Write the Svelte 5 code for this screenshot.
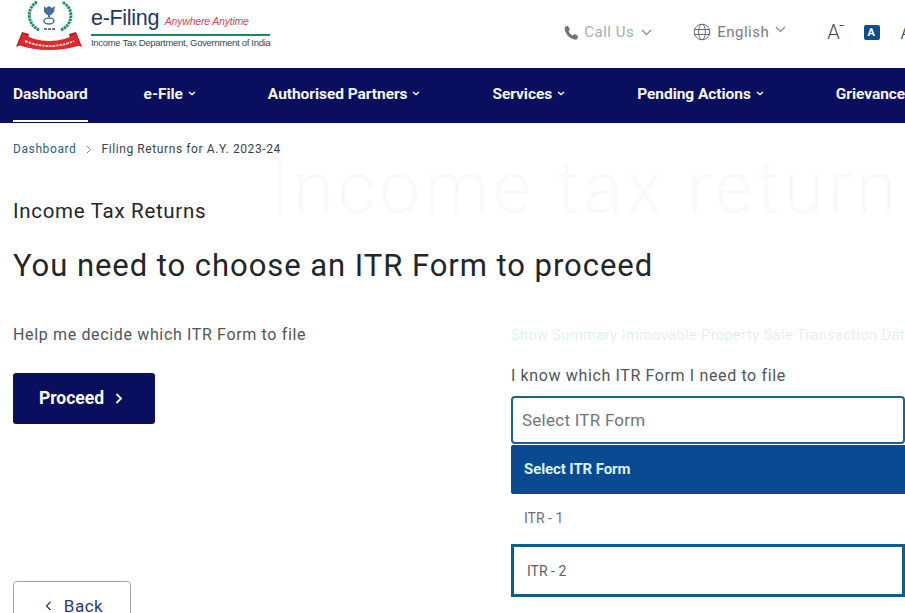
<script>
  const navItems = [
    { label: 'Dashboard', active: true },
    { label: 'e-File', caret: true },
    { label: 'Authorised Partners', caret: true },
    { label: 'Services', caret: true },
    { label: 'Pending Actions', caret: true },
    { label: 'Grievance' }
  ];
</script>

<div class="page">
  <header class="top">
    <div class="brand">
      <svg class="emblem" width="70" height="50" viewBox="0 0 70 50">
        <path d="M24 30C13 25 10 9 22 2M46 30C58 25 60 8 47 2" fill="none" stroke="#1d8f63" stroke-width="3" stroke-dasharray="2.500 .7"/>
        <path d="M29 6l2 2 3-2 3 2 3-2-1 6-3 3h-4l-3-3z" fill="#47709c"/>
        <path d="M33 14h2v3h-2z" fill="#47709c"/>
        <ellipse cx="34" cy="21" rx="5" ry="3" fill="none" stroke="#47709c" stroke-width="1.500"/>
        <path d="M29 29h3M33 29h3M37 29h3" stroke="#4a5058" stroke-width="1.500"/>
        <path d="M1 47L7 32l7 2-2 8z" fill="#b5181e"/>
        <path d="M67 47l-6-15-7 2 2 8z" fill="#b5181e"/>
        <path d="M8 33Q18 41 34 41Q51 41 61 33L66 45Q52 50 34 50Q17 50 3 45z" fill="#dc2a2e"/>
        <path d="M10 41Q22 46 34 46Q47 46 59 41" fill="none" stroke="#fbd9d2" stroke-width="2" stroke-dasharray="3 1 2 1"/>
      </svg>
      <div class="brand-text">
        <div class="brand-title">e-Filing <em>Anywhere Anytime</em></div>
        <div class="brand-sub">Income Tax Department, Government of India</div>
      </div>
    </div>
    <div class="tools">
      <span class="tool call">
        <svg width="17" height="17" viewBox="0 0 24 24"><path d="M6.600 2.500l3.200 5-2 2.600c1 2.600 3.400 5 6.100 6.100l2.600-2 5 3.200-1.500 3.800c-.4.800-1.200 1.100-2 1C9.500 21 3 14.500 2.300 6c-.1-.8.200-1.600 1-2z" fill="#6d7480"/></svg>
        Call Us
        <svg class="chev" width="11" height="7" viewBox="0 0 11 7"><path d="M1 1l4.500 4.500L10 1" fill="none" stroke="#8a8f98" stroke-width="1.300"/></svg>
      </span>
      <span class="tool lang">
        <svg width="18" height="18" viewBox="0 0 18 18" fill="none" stroke="#6a6f78" stroke-width="1"><circle cx="9" cy="9" r="7.800"/><ellipse cx="9" cy="9" rx="3.400" ry="7.800"/><path d="M1.500 6.500h15M1.500 11.500h15"/></svg>
        English
        <svg class="chev up" width="11" height="7" viewBox="0 0 11 7"><path d="M1 1l4.500 4.500L10 1" fill="none" stroke="#8a8f98" stroke-width="1.300"/></svg>
      </span>
      <span class="font-size">A<sup>–</sup></span>
      <span class="font-badge">A</span>
      <span class="font-size next">A</span>
    </div>
  </header>

  <nav class="nav">
    {#each navItems as item}
      <span class="nav-item" class:active={item.active}>
        {item.label}
        {#if item.caret}
          <svg width="8" height="5" viewBox="0 0 8 5"><path d="M1 1l3 2.600L7 1" fill="none" stroke="#fff" stroke-width="1.300"/></svg>
        {/if}
      </span>
    {/each}
  </nav>

  <main class="content">
    <div class="watermark">Income tax return</div>
    <div class="crumbs">
      <span class="crumb-link">Dashboard</span>
      <svg width="6" height="9" viewBox="0 0 6 9"><path d="M1 1l3.500 3.500L1 8" fill="none" stroke="#7b8088" stroke-width="1"/></svg>
      <span>Filing Returns for A.Y. 2023-24</span>
    </div>
    <h2>Income Tax Returns</h2>
    <h1>You need to choose an ITR Form to proceed</h1>

    <div class="columns">
      <section class="left">
        <p class="help">Help me decide which ITR Form to file</p>
        <button class="proceed">Proceed
          <svg width="8" height="11" viewBox="0 0 8 11"><path d="M1.500 1l4.500 4.500L1.500 10" fill="none" stroke="#fff" stroke-width="1.800"/></svg>
        </button>
        <button class="back">
          <svg width="7" height="10" viewBox="0 0 7 10"><path d="M5.500 1L1.500 5l4 4" fill="none" stroke="#2b3a78" stroke-width="1.300"/></svg>
          Back
        </button>
      </section>
      <section class="right">
        <p class="summary">Show Summary Immovable Property Sale Transaction Data</p>
        <p class="know">I know which ITR Form I need to file</p>
        <div class="select">Select ITR Form</div>
        <div class="option selected">Select ITR Form</div>
        <div class="option plain">ITR - 1</div>
        <div class="option focused">ITR - 2</div>
      </section>
    </div>
  </main>
</div>

<style>
  :global(body) {
    background: #fff;
    overflow: hidden;
  }

  .page {
    width: 905px;
    height: 613px;
    overflow: hidden;
    font-family: Roboto, "Liberation Sans", sans-serif;
    color: #23272e;
  }

  .top {
    height: 68px;
    display: flex;
    align-items: flex-start;
    justify-content: space-between;
  }

  .brand {
    display: flex;
    align-items: flex-start;
    padding-left: 15px;
  }

  .emblem {
    margin-right: 6px;
    flex: none;
  }

  .brand-text {
    width: 179px;
    padding-top: 5px;
  }

  .brand-title {
    font-family: "Liberation Sans", sans-serif;
    font-size: 21.500px;
    line-height: 26px;
    color: #1c3a5e;
    border-bottom: 2px solid #1c8a5c;
    white-space: nowrap;
    letter-spacing: -0.3px;
  }

  .brand-title em {
    font-size: 10.500px;
    color: #d8474f;
    letter-spacing: -0.2px;
  }

  .brand-sub {
    font-family: "Liberation Sans", sans-serif;
    font-size: 9.500px;
    line-height: 13px;
    letter-spacing: -0.3px;
    color: #3e4550;
    white-space: nowrap;
  }

  .tools {
    display: flex;
    align-items: center;
    height: 64px;
    font-size: 15px;
    letter-spacing: 0.5px;
    white-space: nowrap;
    flex: none;
    margin-right: -8px;
  }

  .tool {
    display: flex;
    align-items: center;
    gap: 4px;
  }

  .call {
    color: #a9adb3;
    margin-right: 41px;
  }

  .call .chev {
    margin-left: 3px;
  }

  .lang {
    color: #777c84;
    gap: 6px;
    margin-right: 41px;
  }

  .lang .chev {
    margin-top: -6px;
  }

  .font-size {
    font-size: 20px;
    font-weight: 300;
    color: #3e4249;
    letter-spacing: 0;
  }

  .font-size sup {
    font-size: 9px;
    margin-left: -1px;
    vertical-align: 10px;
    line-height: 0;
    font-weight: 500;
  }

  .font-badge {
    width: 16px;
    height: 15px;
    margin: 0 21px 0 19px;
    border-radius: 2px;
    background: #0b4f8a;
    color: #fff;
    font-size: 11px;
    font-weight: 700;
    display: flex;
    align-items: center;
    justify-content: center;
  }

  .nav {
    height: 55px;
    background: #0a0e5e;
    display: flex;
    padding-left: 13px;
    gap: 72px;
    white-space: nowrap;
  }

  .nav-item {
    display: flex;
    align-items: center;
    gap: 5px;
    height: 51px;
    color: #f4f6fb;
    font-size: 15.500px;
    font-weight: 700;
    letter-spacing: -0.05px;
  }

  .nav-item.active {
    height: 52px;
    border-bottom: 2px solid #fff;
    margin-right: -16px;
  }

  .content {
    position: relative;
    padding: 18px 0 0 13px;
  }

  .watermark {
    position: absolute;
    left: 270px;
    top: 21px;
    font-size: 74px;
    font-weight: 300;
    letter-spacing: 3.400px;
    color: #f9f9f9;
    white-space: nowrap;
  }

  .crumbs {
    position: relative;
    display: flex;
    align-items: center;
    gap: 9.500px;
    font-size: 12px;
    line-height: 16px;
    letter-spacing: 0.6px;
    color: #3a3f47;
  }

  .crumb-link {
    color: #1f5f85;
  }

  h2 {
    position: relative;
    margin: 40px 0 0;
    font-size: 20.500px;
    font-weight: 400;
    line-height: 28px;
    letter-spacing: 0.7px;
    color: #22262c;
  }

  h1 {
    position: relative;
    margin: 23px 0 0;
    font-size: 31px;
    line-height: 36px;
    font-weight: 400;
    letter-spacing: 0.95px;
    color: #22262c;
    white-space: nowrap;
  }

  .columns {
    display: grid;
    grid-template-columns: 498px 394px;
    margin-top: 40px;
  }

  .left {
    display: flex;
    flex-direction: column;
    align-items: flex-start;
  }

  .help {
    margin: 0;
    font-size: 16px;
    line-height: 22px;
    letter-spacing: 0.65px;
    color: #50555c;
  }

  .proceed {
    margin-top: 27px;
    width: 142px;
    height: 51px;
    border: 0;
    border-radius: 3px;
    background: #0a0e5e;
    color: #fff;
    font: 700 17.500px Roboto, sans-serif;
    display: flex;
    align-items: center;
    justify-content: center;
    gap: 11px;
    padding: 0 6px 1px 0;
  }

  .back {
    margin-top: 157px;
    width: 118px;
    height: 52px;
    border: 1px solid #9aa3b5;
    border-radius: 4px;
    background: #fff;
    color: #2b3a78;
    font: 400 17px Roboto, sans-serif;
    letter-spacing: 0.5px;
    display: flex;
    align-items: center;
    justify-content: center;
    gap: 12px;
    padding: 0 0 2px 4px;
  }

  .right {
    width: 394px;
  }

  .summary {
    margin: 0;
    font-size: 14px;
    line-height: 22px;
    font-weight: 300;
    letter-spacing: 0.75px;
    color: #d4ebf5;
    white-space: nowrap;
  }

  .know {
    margin: 19px 0 0;
    font-size: 16px;
    line-height: 22px;
    letter-spacing: 0.63px;
    color: #50555c;
  }

  .select {
    margin-top: 9px;
    height: 48px;
    box-sizing: border-box;
    border: 2px solid #17638f;
    border-radius: 4px;
    padding: 0 9px;
    display: flex;
    align-items: center;
    font-size: 17px;
    letter-spacing: 0.25px;
    color: #70757c;
  }

  .option {
    height: 50px;
    box-sizing: border-box;
    padding: 0 13px;
    display: flex;
    align-items: center;
    font-size: 14px;
    color: #6c7178;
  }

  .option.plain {
    padding-bottom: 2px;
  }

  .option.selected {
    margin-top: 1px;
    height: 49px;
    padding-bottom: 2px;
    background: #0a4a92;
    color: #d8f3fb;
    font-size: 15px;
    font-weight: 700;
    letter-spacing: -0.1px;
    border-radius: 2px 0 0 2px;
  }

  .option.focused {
    height: 53px;
    border: 3px solid #0b5f88;
    padding: 0 13px;
    color: #5c6168;
  }
</style>
